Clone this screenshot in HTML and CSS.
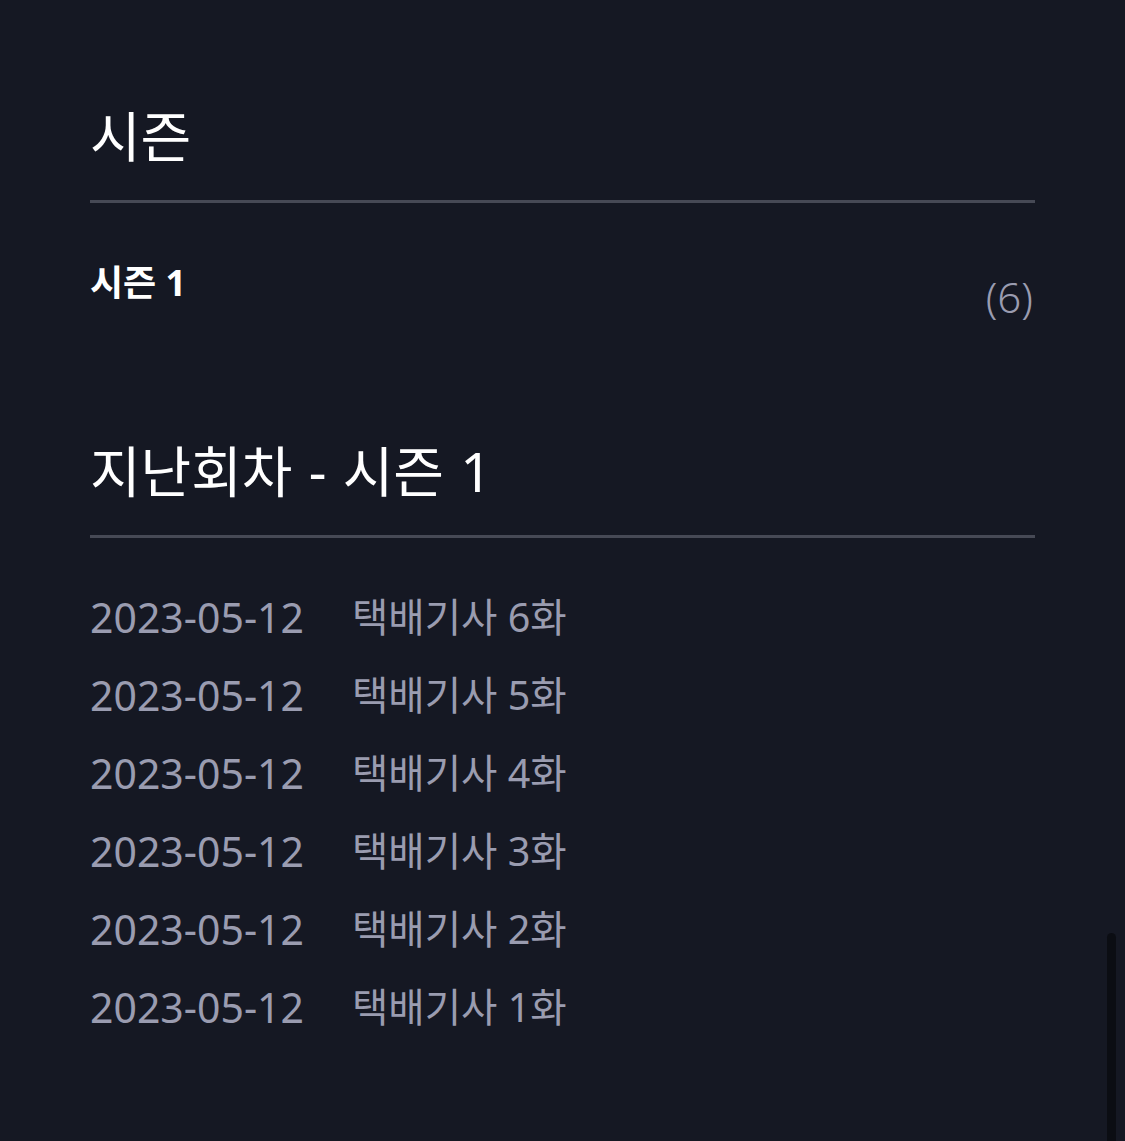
FILE: index.html
```html
<!DOCTYPE html>
<html lang="ko">
<head>
<meta charset="utf-8">
<link rel="stylesheet" href="styles.css">
</head>
<body>
<div class="page">
  <section class="seasons">
    <h2 class="title">시즌</h2>
    <div class="season-row">
      <span class="season-name">시즌 1</span>
      <span class="season-count">(6)</span>
    </div>
  </section>
  <section class="episodes">
    <h2 class="title">지난회차 - 시즌 1</h2>
    <ul class="ep-list">
      <li class="ep"><span class="ep-date">2023-05-12</span><span class="ep-name">택배기사 6화</span></li>
      <li class="ep"><span class="ep-date">2023-05-12</span><span class="ep-name">택배기사 5화</span></li>
      <li class="ep"><span class="ep-date">2023-05-12</span><span class="ep-name">택배기사 4화</span></li>
      <li class="ep"><span class="ep-date">2023-05-12</span><span class="ep-name">택배기사 3화</span></li>
      <li class="ep"><span class="ep-date">2023-05-12</span><span class="ep-name">택배기사 2화</span></li>
      <li class="ep"><span class="ep-date">2023-05-12</span><span class="ep-name">택배기사 1화</span></li>
    </ul>
  </section>
</div>
<div class="scrollbar"></div>
</body>
</html>
```
FILE: styles.css
```css
html, body {
  margin: 0;
  padding: 0;
  background: #151823;
  height: 100%;
  overflow: hidden;
}
body {
  font-family: "Noto Sans", "Noto Sans CJK KR", sans-serif;
  color: #ffffff;
}
.page {
  padding: 90px 90px 0 90px;
  width: 945px;
}
.title {
  margin: 0;
  font-size: 55px;
  font-weight: 400;
  line-height: 92px;
  padding-bottom: 18px;
  border-bottom: 3px solid #464955;
  word-spacing: 2px;
}
.season-row {
  display: flex;
  justify-content: space-between;
  align-items: flex-start;
  padding-top: 50px;
  height: 222px;
  box-sizing: border-box;
}
.season-name {
  font-size: 36px;
  font-weight: 700;
  line-height: 60px;
}
.season-count {
  font-size: 42px;
  font-weight: 300;
  color: #9a9cb0;
  line-height: 60px;
  padding-top: 14px;
  margin-right: 2px;
}
.ep-list {
  list-style: none;
  margin: 0;
  padding: 40px 0 0 0;
}
.ep {
  display: flex;
  gap: 48px;
  line-height: 78px;
  color: #9a9cb0;
}
.ep-date {
  font-size: 41px;
}
.ep-name {
  font-size: 39.5px;
}
.scrollbar {
  position: absolute;
  left: 1107px;
  top: 933px;
  width: 9px;
  height: 220px;
  border-radius: 5px;
  background: #0b0d13;
}
```
